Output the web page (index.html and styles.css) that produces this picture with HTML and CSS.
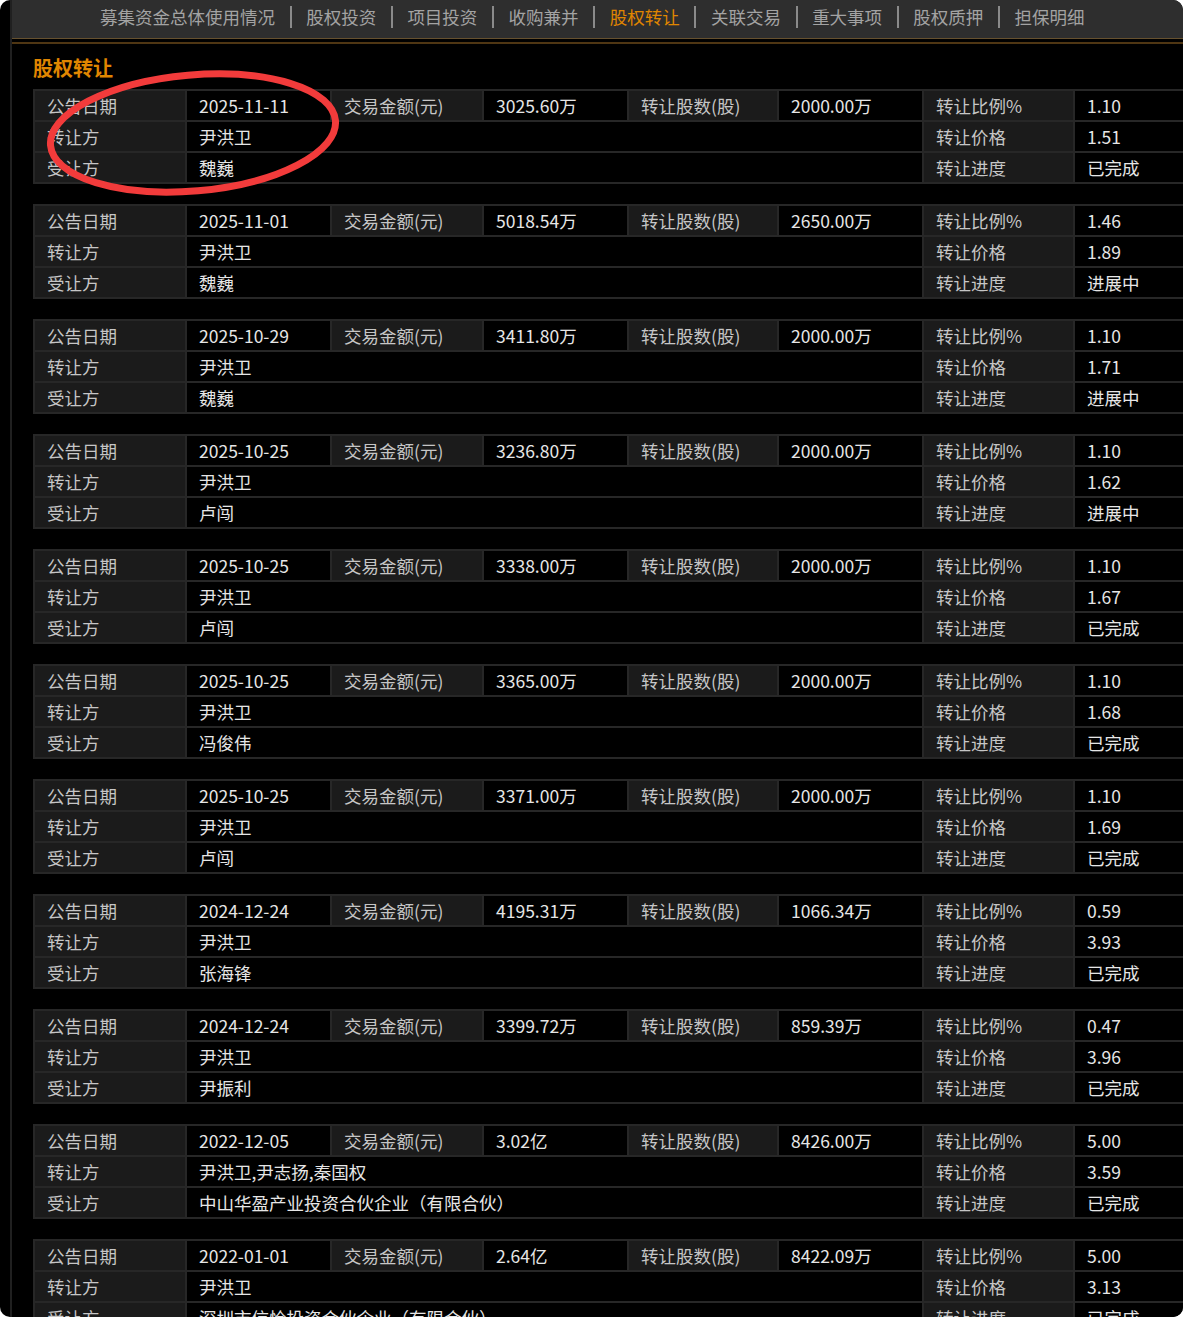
FILE: index.html
```html
<!DOCTYPE html>
<html lang="zh-CN">
<head>
  <meta charset="UTF-8">
  <title>股权转让</title>
  <link rel="stylesheet" href="styles.css">
</head>
<body>
  <div class="window">
    <div class="main">
      <div class="tabs">
        <span class="tab">募集资金总体使用情况</span>
        <span class="tab">股权投资</span>
        <span class="tab">项目投资</span>
        <span class="tab">收购兼并</span>
        <span class="tab active">股权转让</span>
        <span class="tab">关联交易</span>
        <span class="tab">重大事项</span>
        <span class="tab">股权质押</span>
        <span class="tab">担保明细</span>
      </div>
      <div class="tabs-rule"></div>

      <div class="section">
        <h2 class="section-title">股权转让</h2>

        <table class="deal">
          <colgroup><col class="c1"><col class="c2"><col class="c3"><col class="c4"><col class="c5"><col class="c6"><col class="c7"><col class="c8"></colgroup>
          <tr><td class="lbl">公告日期</td><td class="val">2025-11-11</td><td class="lbl">交易金额(元)</td><td class="val">3025.60万</td><td class="lbl">转让股数(股)</td><td class="val">2000.00万</td><td class="lbl">转让比例%</td><td class="val">1.10</td></tr>
          <tr><td class="lbl">转让方</td><td class="val" colspan="5">尹洪卫</td><td class="lbl">转让价格</td><td class="val">1.51</td></tr>
          <tr><td class="lbl">受让方</td><td class="val" colspan="5">魏巍</td><td class="lbl">转让进度</td><td class="val">已完成</td></tr>
        </table>

        <table class="deal">
          <colgroup><col class="c1"><col class="c2"><col class="c3"><col class="c4"><col class="c5"><col class="c6"><col class="c7"><col class="c8"></colgroup>
          <tr><td class="lbl">公告日期</td><td class="val">2025-11-01</td><td class="lbl">交易金额(元)</td><td class="val">5018.54万</td><td class="lbl">转让股数(股)</td><td class="val">2650.00万</td><td class="lbl">转让比例%</td><td class="val">1.46</td></tr>
          <tr><td class="lbl">转让方</td><td class="val" colspan="5">尹洪卫</td><td class="lbl">转让价格</td><td class="val">1.89</td></tr>
          <tr><td class="lbl">受让方</td><td class="val" colspan="5">魏巍</td><td class="lbl">转让进度</td><td class="val">进展中</td></tr>
        </table>

        <table class="deal">
          <colgroup><col class="c1"><col class="c2"><col class="c3"><col class="c4"><col class="c5"><col class="c6"><col class="c7"><col class="c8"></colgroup>
          <tr><td class="lbl">公告日期</td><td class="val">2025-10-29</td><td class="lbl">交易金额(元)</td><td class="val">3411.80万</td><td class="lbl">转让股数(股)</td><td class="val">2000.00万</td><td class="lbl">转让比例%</td><td class="val">1.10</td></tr>
          <tr><td class="lbl">转让方</td><td class="val" colspan="5">尹洪卫</td><td class="lbl">转让价格</td><td class="val">1.71</td></tr>
          <tr><td class="lbl">受让方</td><td class="val" colspan="5">魏巍</td><td class="lbl">转让进度</td><td class="val">进展中</td></tr>
        </table>

        <table class="deal">
          <colgroup><col class="c1"><col class="c2"><col class="c3"><col class="c4"><col class="c5"><col class="c6"><col class="c7"><col class="c8"></colgroup>
          <tr><td class="lbl">公告日期</td><td class="val">2025-10-25</td><td class="lbl">交易金额(元)</td><td class="val">3236.80万</td><td class="lbl">转让股数(股)</td><td class="val">2000.00万</td><td class="lbl">转让比例%</td><td class="val">1.10</td></tr>
          <tr><td class="lbl">转让方</td><td class="val" colspan="5">尹洪卫</td><td class="lbl">转让价格</td><td class="val">1.62</td></tr>
          <tr><td class="lbl">受让方</td><td class="val" colspan="5">卢闯</td><td class="lbl">转让进度</td><td class="val">进展中</td></tr>
        </table>

        <table class="deal">
          <colgroup><col class="c1"><col class="c2"><col class="c3"><col class="c4"><col class="c5"><col class="c6"><col class="c7"><col class="c8"></colgroup>
          <tr><td class="lbl">公告日期</td><td class="val">2025-10-25</td><td class="lbl">交易金额(元)</td><td class="val">3338.00万</td><td class="lbl">转让股数(股)</td><td class="val">2000.00万</td><td class="lbl">转让比例%</td><td class="val">1.10</td></tr>
          <tr><td class="lbl">转让方</td><td class="val" colspan="5">尹洪卫</td><td class="lbl">转让价格</td><td class="val">1.67</td></tr>
          <tr><td class="lbl">受让方</td><td class="val" colspan="5">卢闯</td><td class="lbl">转让进度</td><td class="val">已完成</td></tr>
        </table>

        <table class="deal">
          <colgroup><col class="c1"><col class="c2"><col class="c3"><col class="c4"><col class="c5"><col class="c6"><col class="c7"><col class="c8"></colgroup>
          <tr><td class="lbl">公告日期</td><td class="val">2025-10-25</td><td class="lbl">交易金额(元)</td><td class="val">3365.00万</td><td class="lbl">转让股数(股)</td><td class="val">2000.00万</td><td class="lbl">转让比例%</td><td class="val">1.10</td></tr>
          <tr><td class="lbl">转让方</td><td class="val" colspan="5">尹洪卫</td><td class="lbl">转让价格</td><td class="val">1.68</td></tr>
          <tr><td class="lbl">受让方</td><td class="val" colspan="5">冯俊伟</td><td class="lbl">转让进度</td><td class="val">已完成</td></tr>
        </table>

        <table class="deal">
          <colgroup><col class="c1"><col class="c2"><col class="c3"><col class="c4"><col class="c5"><col class="c6"><col class="c7"><col class="c8"></colgroup>
          <tr><td class="lbl">公告日期</td><td class="val">2025-10-25</td><td class="lbl">交易金额(元)</td><td class="val">3371.00万</td><td class="lbl">转让股数(股)</td><td class="val">2000.00万</td><td class="lbl">转让比例%</td><td class="val">1.10</td></tr>
          <tr><td class="lbl">转让方</td><td class="val" colspan="5">尹洪卫</td><td class="lbl">转让价格</td><td class="val">1.69</td></tr>
          <tr><td class="lbl">受让方</td><td class="val" colspan="5">卢闯</td><td class="lbl">转让进度</td><td class="val">已完成</td></tr>
        </table>

        <table class="deal">
          <colgroup><col class="c1"><col class="c2"><col class="c3"><col class="c4"><col class="c5"><col class="c6"><col class="c7"><col class="c8"></colgroup>
          <tr><td class="lbl">公告日期</td><td class="val">2024-12-24</td><td class="lbl">交易金额(元)</td><td class="val">4195.31万</td><td class="lbl">转让股数(股)</td><td class="val">1066.34万</td><td class="lbl">转让比例%</td><td class="val">0.59</td></tr>
          <tr><td class="lbl">转让方</td><td class="val" colspan="5">尹洪卫</td><td class="lbl">转让价格</td><td class="val">3.93</td></tr>
          <tr><td class="lbl">受让方</td><td class="val" colspan="5">张海锋</td><td class="lbl">转让进度</td><td class="val">已完成</td></tr>
        </table>

        <table class="deal">
          <colgroup><col class="c1"><col class="c2"><col class="c3"><col class="c4"><col class="c5"><col class="c6"><col class="c7"><col class="c8"></colgroup>
          <tr><td class="lbl">公告日期</td><td class="val">2024-12-24</td><td class="lbl">交易金额(元)</td><td class="val">3399.72万</td><td class="lbl">转让股数(股)</td><td class="val">859.39万</td><td class="lbl">转让比例%</td><td class="val">0.47</td></tr>
          <tr><td class="lbl">转让方</td><td class="val" colspan="5">尹洪卫</td><td class="lbl">转让价格</td><td class="val">3.96</td></tr>
          <tr><td class="lbl">受让方</td><td class="val" colspan="5">尹振利</td><td class="lbl">转让进度</td><td class="val">已完成</td></tr>
        </table>

        <table class="deal">
          <colgroup><col class="c1"><col class="c2"><col class="c3"><col class="c4"><col class="c5"><col class="c6"><col class="c7"><col class="c8"></colgroup>
          <tr><td class="lbl">公告日期</td><td class="val">2022-12-05</td><td class="lbl">交易金额(元)</td><td class="val">3.02亿</td><td class="lbl">转让股数(股)</td><td class="val">8426.00万</td><td class="lbl">转让比例%</td><td class="val">5.00</td></tr>
          <tr><td class="lbl">转让方</td><td class="val" colspan="5">尹洪卫,尹志扬,秦国权</td><td class="lbl">转让价格</td><td class="val">3.59</td></tr>
          <tr><td class="lbl">受让方</td><td class="val" colspan="5">中山华盈产业投资合伙企业（有限合伙）</td><td class="lbl">转让进度</td><td class="val">已完成</td></tr>
        </table>

        <table class="deal">
          <colgroup><col class="c1"><col class="c2"><col class="c3"><col class="c4"><col class="c5"><col class="c6"><col class="c7"><col class="c8"></colgroup>
          <tr><td class="lbl">公告日期</td><td class="val">2022-01-01</td><td class="lbl">交易金额(元)</td><td class="val">2.64亿</td><td class="lbl">转让股数(股)</td><td class="val">8422.09万</td><td class="lbl">转让比例%</td><td class="val">5.00</td></tr>
          <tr><td class="lbl">转让方</td><td class="val" colspan="5">尹洪卫</td><td class="lbl">转让价格</td><td class="val">3.13</td></tr>
          <tr><td class="lbl">受让方</td><td class="val" colspan="5">深圳市信恰投资合伙企业（有限合伙）</td><td class="lbl">转让进度</td><td class="val">已完成</td></tr>
        </table>
      </div>
    </div>

    <!-- 红圈标注 -->
    <svg class="mark" width="400" height="220" viewBox="0 0 400 220">
      <ellipse cx="193" cy="133" rx="143" ry="58" transform="rotate(-5 193 133)" fill="none" stroke="#f23b3b" stroke-width="7"/>
    </svg>
  </div>
</body>
</html>
```

FILE: styles.css
```css
:root {
  --bar-bg: #2e2e2e;
  --cell-bg: #1b1b1b;
  --cell-line: #272727;
  --orange: #e08600;
}
body {
  margin: 0;
  background: #fff;
  font-family: "Noto Sans CJK SC", "Microsoft YaHei", sans-serif;
}
.window {
  position: relative;
  width: 1183px;
  height: 1317px;
  box-sizing: border-box;
  padding-left: 10px;
  background: #000;
  border-radius: 10px;
  overflow: hidden;
}
.main {
  height: 100%;
  border-left: 2px solid #202020;
}
.tabs {
  display: flex;
  align-items: center;
  box-sizing: border-box;
  height: 39px;
  padding: 0 0 4px 88px;
  background: var(--bar-bg);
  border-bottom: 1px solid #66512f;
  font-size: 17.5px;
  color: #a3a3a3;
  white-space: nowrap;
}
.tab {
  padding: 0 14.6px;
  line-height: 22px;
  border-left: 2px solid #8a8a8a;
}
.tab:first-child {
  padding-left: 0;
  border-left: none;
}
.tab.active {
  color: var(--orange);
}
.tabs-rule {
  margin-top: 3px;
  border-top: 2px solid #4f3613;
}
.section {
  padding: 9px 0 0 21px;
}
.section-title {
  margin: 0 0 6px;
  font-size: 20px;
  line-height: 30px;
  font-weight: bold;
  color: var(--orange);
}
.deal {
  border-collapse: collapse;
  table-layout: fixed;
  width: 1162px;
  margin-bottom: 20px;
  font-size: 17.5px;
}
.c1 { width: 152px; }
.c2 { width: 145px; }
.c3 { width: 152px; }
.c4 { width: 145px; }
.c5 { width: 150px; }
.c6 { width: 145px; }
.c7 { width: 151px; }
.c8 { width: 122px; }
.deal td {
  height: 29px;
  padding: 0 0 0 12px;
  border: 2px solid var(--cell-line);
  line-height: 29px;
  white-space: nowrap;
  overflow: hidden;
}
.lbl {
  background: var(--cell-bg);
  color: #c6c6c6;
}
.val {
  background: #000;
  color: #e6e6e6;
}
.mark {
  position: absolute;
  left: 0;
  top: 0;
}
```
